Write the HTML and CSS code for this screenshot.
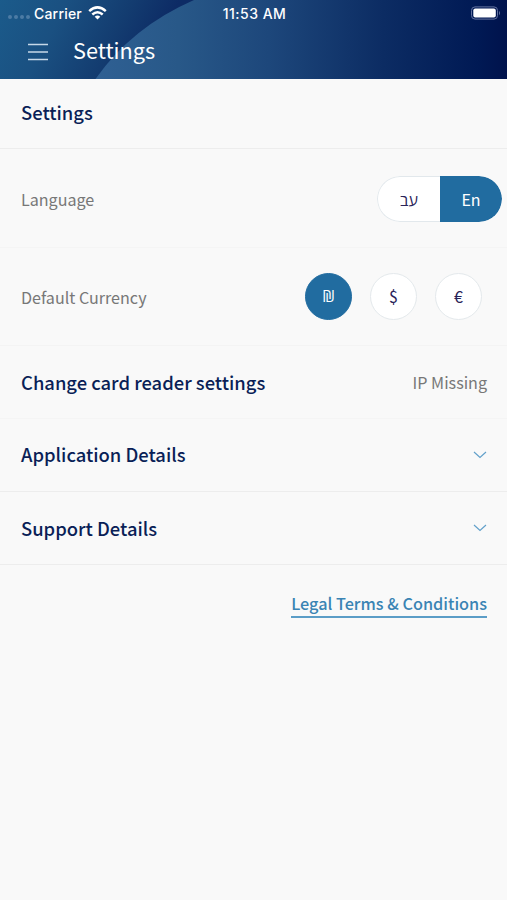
FILE: index.html
```html
<!DOCTYPE html>
<html lang="en">
<head>
    <meta charset="UTF-8">
    <meta name="viewport" content="width=device-width, initial-scale=1.0">
    <title>Settings</title>
    <link rel="stylesheet" href="styles.css">
</head>
<body>
    <header class="header">
        <svg class="header-bg" viewBox="0 0 507 79" preserveAspectRatio="none">
            <defs>
                <linearGradient id="base" x1="0" y1="0" x2="150" y2="75" gradientUnits="userSpaceOnUse" gradientTransform="translate(-15 15)">
                    <stop offset="0" stop-color="#1b5c8c"/>
                    <stop offset="0.4" stop-color="#1a5081"/>
                    <stop offset="0.75" stop-color="#133c70"/>
                    <stop offset="1" stop-color="#0d2b65"/>
                </linearGradient>
                <linearGradient id="arc" x1="96" y1="0" x2="507" y2="0" gradientUnits="userSpaceOnUse">
                    <stop offset="0" stop-color="#2f6093"/>
                    <stop offset="0.2" stop-color="#285888"/>
                    <stop offset="0.42" stop-color="#1d477b"/>
                    <stop offset="0.7" stop-color="#0c2c63"/>
                    <stop offset="0.93" stop-color="#001954"/>
                    <stop offset="1" stop-color="#00124c"/>
                </linearGradient>
            </defs>
            <rect width="507" height="79" fill="url(#base)"/>
            <path d="M95.500 79Q132 27 194 0H507V79Z" fill="url(#arc)"/>
        </svg>
        <div class="status-bar">
            <div class="status-left">
                <span class="signal"><i></i><i></i><i></i><i></i></span>
                <span class="carrier">Carrier</span>
                <svg class="wifi" width="19" height="14" viewBox="0 0 19 14">
                    <g fill="none" stroke="#fff" stroke-width="2.500">
                        <path d="M1.200 5.100Q9.500-2.300 17.800 5.100"/>
                        <path d="M4.300 8.500Q9.500 3.900 14.700 8.500"/>
                    </g>
                    <path d="M6.700 10.700Q9.500 8.400 12.300 10.700L9.500 13.600Z" fill="#fff"/>
                </svg>
            </div>
            <span class="time">11:53 AM</span>
            <svg class="battery" width="31" height="14" viewBox="0 0 31 14">
                <rect x="1.500" y="0.900" width="26" height="12.200" rx="3.500" fill="none" stroke="#6473a0"/>
                <rect x="3.300" y="2.600" width="22.500" height="8.800" rx="2" fill="#fff"/>
                <path d="M29 4.700Q31 7 29 9.300Z" fill="#6473a0"/>
            </svg>
        </div>
        <div class="nav-bar">
            <svg class="menu" width="20" height="18" viewBox="0 0 20 18">
                <path d="M0 1.500H20M0 9H20M0 16.500H20" stroke="#c6d8e8" stroke-width="1.600"/>
            </svg>
            <h1 class="title">Settings</h1>
        </div>
    </header>

    <main class="settings">
        <div class="row row-heading">
            <h2>Settings</h2>
        </div>
        <div class="row row-language">
            <span class="label">Language</span>
            <div class="toggle">
                <span class="toggle-item hebrew">עב</span>
                <span class="toggle-item active">En</span>
            </div>
        </div>
        <div class="row row-currency">
            <span class="label">Default Currency</span>
            <div class="currencies">
                <span class="currency active">₪</span>
                <span class="currency">$</span>
                <span class="currency">€</span>
            </div>
        </div>
        <div class="row row-reader">
            <h2>Change card reader settings</h2>
            <span class="value">IP Missing</span>
        </div>
        <div class="row row-application">
            <h2>Application Details</h2>
            <svg class="chevron" width="14" height="8" viewBox="0 0 14 8">
                <path d="M1 1L7 6.500L13 1"/>
            </svg>
        </div>
        <div class="row row-support">
            <h2>Support Details</h2>
            <svg class="chevron" width="14" height="8" viewBox="0 0 14 8">
                <path d="M1 1L7 6.500L13 1"/>
            </svg>
        </div>
        <div class="legal">
            <a class="legal-link">Legal Terms &amp; Conditions</a>
        </div>
    </main>
</body>
</html>
```

FILE: styles.css
```css
* {
    box-sizing: border-box;
}
body {
    margin: 0;
    min-height: 900px;
    background: #f9f9f9;
    font-family: "Noto Sans CJK SC", "Noto Sans", sans-serif;
    color: #0a1f57;
}
h1, h2 {
    margin: 0;
    white-space: nowrap;
}
.header {
    position: relative;
    height: 79px;
    color: #fff;
}
.header-bg {
    position: absolute;
    top: 0;
    left: 0;
    width: 100%;
    height: 100%;
}
.status-bar {
    position: relative;
    display: grid;
    grid-template-columns: 1fr auto 1fr;
    align-items: center;
    height: 26px;
    padding: 0 6px 0 8px;
    font-family: Inter, sans-serif;
    font-size: 14px;
    font-weight: 500;
}
.status-left {
    display: flex;
    align-items: center;
}
.signal {
    display: flex;
    gap: 2px;
    width: 26px;
    padding-top: 8px;
}
.signal i {
    width: 4px;
    height: 4px;
    border-radius: 50%;
    background: #4c7ba4;
}
.carrier {
    width: 54px;
    letter-spacing: 0.2px;
}
.time {
    letter-spacing: 0.5px;
}
.battery {
    justify-self: end;
}
.nav-bar {
    position: relative;
    display: flex;
    align-items: center;
    gap: 25px;
    height: 51px;
    padding-left: 28px;
}
.title {
    padding-bottom: 3px;
    font-size: 21.7px;
    font-weight: 400;
    line-height: 30px;
}
.row {
    display: flex;
    align-items: center;
    justify-content: space-between;
    padding: 0 20px 0 21px;
    border-bottom: 1px solid #ededed;
}
.row h2 {
    font-size: 18.4px;
    font-weight: 500;
    line-height: 26px;
}
.row-heading {
    height: 70px;
    padding-bottom: 4px;
}
.row-language {
    height: 99px;
    padding-top: 2px;
    padding-right: 5px;
    border-color: #f5f5f5;
}
.row-currency {
    height: 98px;
    padding-right: 25px;
    border-color: #f4f4f4;
}
.row-reader {
    height: 73px;
    border-color: #f5f5f5;
}
.row-application {
    height: 73px;
    padding-bottom: 1px;
}
.row-application h2, .row-support h2 {
    padding-bottom: 1px;
}
.row-support {
    height: 73px;
}
.label, .value {
    font-size: 16.1px;
    color: #777;
}
.toggle {
    display: flex;
    width: 125px;
    height: 46px;
    border-radius: 23px;
    overflow: hidden;
}
.toggle-item {
    display: flex;
    flex: 1;
    align-items: center;
    justify-content: center;
    background: #fff;
    border: 1px solid #e2e8ec;
    border-right: 0;
    border-radius: 23px 0 0 23px;
    font-size: 16px;
    color: #292358;
}
.hebrew {
    padding-top: 1px;
    font-family: "Open Sans", "Noto Sans", sans-serif;
}
.toggle-item.active {
    background: #216ca0;
    border: 0;
    border-radius: 0 23px 23px 0;
    color: #fff;
}
.currencies {
    display: flex;
    gap: 18px;
    margin-bottom: 1px;
}
.currency {
    display: flex;
    align-items: center;
    justify-content: center;
    width: 47px;
    height: 47px;
    border: 1px solid #e4e9ec;
    border-radius: 50%;
    background: #fff;
    font-size: 16px;
    color: #292358;
}
.currency.active {
    background: #216ca0;
    border-color: #216ca0;
    color: #fff;
    font-family: "Open Sans", "Noto Sans", sans-serif;
    font-size: 16px;
}
.chevron path {
    fill: none;
    stroke: #62a0ca;
    stroke-width: 1.2;
}
.legal {
    display: flex;
    justify-content: flex-end;
    padding: 25px 20px 0;
}
.legal-link {
    border-bottom: 2px solid #5b9dc7;
    font-size: 16.25px;
    font-weight: 500;
    line-height: 26px;
    color: #3a84b4;
}
```
